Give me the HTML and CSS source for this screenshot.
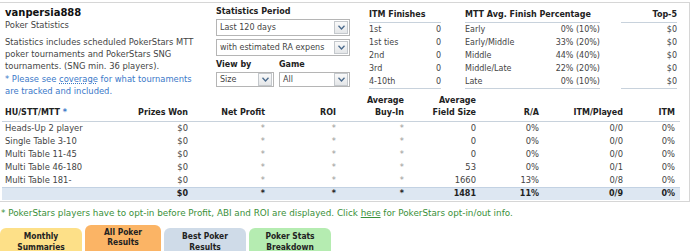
FILE: index.html
```html
<!DOCTYPE html>
<html lang="en">
  <head>
    <meta charset="UTF-8" />
    <title>Poker Statistics</title>
    <link rel="stylesheet" href="styles.css">
  </head>
  <body>
    <div class="panel">
      <div class="top">
        <div class="intro">
          <h1>vanpersia888</h1>
          <div class="subtitle">Poker Statistics</div>
          <p>Statistics includes scheduled PokerStars MTT poker tournaments and PokerStars SNG tournaments. (SNG min. 36 players).</p>
          <p class="note">* Please see <a href="#">coverage</a> for what tournaments are tracked and included.</p>
        </div>

        <div class="filters">
          <div class="label">Statistics Period</div>
          <div class="select">
            <span>Last 120 days</span>
            <span class="arrow"><svg width="7" height="5" viewBox="0 0 7 5"><path d="M0.5 0.8 L3.5 4 L6.5 0.8" fill="none" stroke="#4a6a8c" stroke-width="1.3"/></svg></span>
          </div>
          <div class="select">
            <span>with estimated RA expens</span>
            <span class="arrow"><svg width="7" height="5" viewBox="0 0 7 5"><path d="M0.5 0.8 L3.5 4 L6.5 0.8" fill="none" stroke="#4a6a8c" stroke-width="1.3"/></svg></span>
          </div>
          <div class="filter-row">
            <div class="filter-size">
              <div class="label">View by</div>
              <div class="select">
                <span>Size</span>
                <span class="arrow"><svg width="7" height="5" viewBox="0 0 7 5"><path d="M0.5 0.8 L3.5 4 L6.5 0.8" fill="none" stroke="#4a6a8c" stroke-width="1.3"/></svg></span>
              </div>
            </div>
            <div class="filter-game">
              <div class="label">Game</div>
              <div class="select">
                <span>All</span>
                <span class="arrow"><svg width="7" height="5" viewBox="0 0 7 5"><path d="M0.5 0.8 L3.5 4 L6.5 0.8" fill="none" stroke="#4a6a8c" stroke-width="1.3"/></svg></span>
              </div>
            </div>
          </div>
        </div>

        <table class="mini itm">
          <tr><th colspan="2">ITM Finishes</th></tr>
          <tr><td>1st</td><td class="num">0</td></tr>
          <tr><td>1st ties</td><td class="num">0</td></tr>
          <tr><td>2nd</td><td class="num">0</td></tr>
          <tr><td>3rd</td><td class="num">0</td></tr>
          <tr><td>4-10th</td><td class="num">0</td></tr>
        </table>

        <table class="mini mtt">
          <tr><th colspan="2">MTT Avg. Finish Percentage</th></tr>
          <tr><td>Early</td><td class="num">0% (10%)</td></tr>
          <tr><td>Early/Middle</td><td class="num">33% (20%)</td></tr>
          <tr><td>Middle</td><td class="num">44% (40%)</td></tr>
          <tr><td>Middle/Late</td><td class="num">22% (20%)</td></tr>
          <tr><td>Late</td><td class="num">0% (10%)</td></tr>
        </table>

        <table class="mini top5">
          <tr><th class="num">Top-5</th></tr>
          <tr><td class="num">$0</td></tr>
          <tr><td class="num">$0</td></tr>
          <tr><td class="num">$0</td></tr>
          <tr><td class="num">$0</td></tr>
          <tr><td class="num">$0</td></tr>
        </table>
      </div>

      <table class="results">
        <colgroup>
          <col style="width: 118px" />
          <col style="width: 72px" />
          <col style="width: 77px" />
          <col style="width: 71px" />
          <col style="width: 68px" />
          <col style="width: 72px" />
          <col style="width: 63px" />
          <col style="width: 84px" />
          <col style="width: 53px" />
        </colgroup>
        <thead>
          <tr>
            <th class="first">HU/STT/MTT <span class="star">*</span></th>
            <th>Prizes Won</th>
            <th>Net Profit</th>
            <th>ROI</th>
            <th>Average<br />Buy-In</th>
            <th>Average<br />Field Size</th>
            <th>R/A</th>
            <th>ITM/Played</th>
            <th>ITM</th>
          </tr>
        </thead>
        <tbody>
          <tr>
            <td class="first">Heads-Up 2 player</td>
            <td>$0</td><td class="ast">*</td><td class="ast">*</td><td class="ast">*</td>
            <td>0</td><td>0%</td><td>0/0</td><td>0%</td>
          </tr>
          <tr>
            <td class="first">Single Table 3-10</td>
            <td>$0</td><td class="ast">*</td><td class="ast">*</td><td class="ast">*</td>
            <td>0</td><td>0%</td><td>0/0</td><td>0%</td>
          </tr>
          <tr>
            <td class="first">Multi Table 11-45</td>
            <td>$0</td><td class="ast">*</td><td class="ast">*</td><td class="ast">*</td>
            <td>0</td><td>0%</td><td>0/0</td><td>0%</td>
          </tr>
          <tr>
            <td class="first">Multi Table 46-180</td>
            <td>$0</td><td class="ast">*</td><td class="ast">*</td><td class="ast">*</td>
            <td>53</td><td>0%</td><td>0/1</td><td>0%</td>
          </tr>
          <tr>
            <td class="first">Multi Table 181-</td>
            <td>$0</td><td class="ast">*</td><td class="ast">*</td><td class="ast">*</td>
            <td>1660</td><td>13%</td><td>0/8</td><td>0%</td>
          </tr>
          <tr class="total">
            <td class="first"></td>
            <td>$0</td><td class="ast">*</td><td class="ast">*</td><td class="ast">*</td>
            <td>1481</td><td>11%</td><td>0/9</td><td>0%</td>
          </tr>
        </tbody>
      </table>
    </div>

    <p class="footnote">* PokerStars players have to opt-in before Profit, ABI and ROI are displayed. Click <a href="#">here</a> for PokerStars opt-in/out info.</p>

    <div class="tabs">
      <div class="tab monthly">Monthly<br />Summaries</div>
      <div class="tab all">All Poker<br />Results</div>
      <div class="tab best">Best Poker<br />Results</div>
      <div class="tab stats">Poker Stats<br />Breakdown</div>
    </div>
  </body>
</html>
```

FILE: styles.css
```css
body {
  font-family: "DejaVu Sans", Verdana, sans-serif;
  font-size: 8.4px;
  color: #444;
  background-color: #ffffff;
  margin: 0;
  overflow: hidden;
}
a {
  color: #3a6fb0;
}
.panel {
  width: 689px;
  margin: 2px 0 0 -1px;
  border: 1px solid #d6d6d6;
  background-color: #fff;
  padding-bottom: 1px;
}
.top {
  display: flex;
  align-items: flex-start;
  height: 89px;
  padding: 3px 0 0 5px;
}
.intro {
  width: 202px;
}
h1 {
  margin: 0;
  font-size: 10px;
  line-height: 14px;
  color: #111;
}
.subtitle {
  line-height: 11px;
  margin-bottom: 5px;
}
.intro p {
  margin: 0 0 1px;
  line-height: 12px;
}
.intro .note {
  color: #3a78c8;
}
.intro .note a {
  color: #3a78c8;
  text-decoration: underline dotted;
}
.filters {
  width: 134px;
  margin-left: 9px;
}
.label {
  font-size: 8px;
  font-weight: bold;
  color: #222;
  line-height: 11px;
  margin-bottom: 2px;
}
.select {
  display: flex;
  align-items: center;
  justify-content: space-between;
  height: 15px;
  border: 1px solid #b5b5b5;
  background-color: #fff;
  padding-left: 3px;
  margin-bottom: 3px;
  font-size: 8px;
  overflow: hidden;
  white-space: nowrap;
}
.arrow {
  display: flex;
  align-items: center;
  justify-content: center;
  flex: none;
  width: 12px;
  height: 11px;
  margin-right: 1px;
  border: 1px solid #c4c8cc;
  background: linear-gradient(#fafafa, #e4e6e8);
}
.filter-row {
  display: flex;
  gap: 5px;
}
.filter-size {
  width: 58px;
}
.filter-game {
  flex: 1;
}
.filter-row .select {
  height: 13px;
}
.mini {
  border-collapse: collapse;
  margin-top: 3px;
  font-size: 8px;
}
.mini th {
  text-align: left;
  font-weight: bold;
  color: #222;
  line-height: 11px;
  padding: 0 0 2px;
  border-bottom: 1px solid #c8d2dc;
}
.mini td {
  line-height: 13px;
  padding: 0;
  white-space: nowrap;
}
.mini tr:last-child td {
  border-bottom: 1px solid #c8d2dc;
}
.mini .num {
  text-align: right;
}
.itm {
  width: 72px;
  margin-left: 19px;
}
.mtt {
  width: 135px;
  margin-left: 24px;
}
.top5 {
  width: 56px;
  margin-left: 21px;
}
.results {
  table-layout: fixed;
  border-collapse: collapse;
  width: 678px;
  margin-left: 2px;
}
.results th {
  font-size: 8px;
  font-weight: bold;
  color: #222;
  text-align: right;
  vertical-align: bottom;
  line-height: 12px;
  padding: 0 4px 2px;
  border-bottom: 1px solid #c8d2dc;
}
.results td {
  text-align: right;
  line-height: 13px;
  padding: 0 4px;
  white-space: nowrap;
}
.results th:last-child,
.results td:last-child {
  padding-right: 5px;
}
.results .first {
  text-align: left;
  padding-left: 3px;
}
.results .star {
  color: #3a78c8;
}
.results .ast {
  color: #999;
}
.results .total td {
  background-color: #dde7f2;
  border-top: 1px solid #c3d2e3;
  font-size: 8px;
  font-weight: bold;
  color: #222;
  line-height: 12px;
}
.footnote {
  margin: 5px 0 0 1px;
  font-size: 8.8px;
  color: #3a903a;
  line-height: 12px;
}
.footnote a {
  color: #3a903a;
}
.tabs {
  display: flex;
  align-items: flex-end;
  gap: 3px;
  margin-top: 7px;
  height: 28px;
}
.tab {
  width: 82px;
  height: 23px;
  padding-top: 3px;
  font-family: "DejaVu Sans Condensed", "DejaVu Sans", sans-serif;
  font-weight: bold;
  font-size: 8.4px;
  line-height: 11px;
  text-align: center;
  color: #222;
  border-radius: 6px 6px 0 0;
  overflow: hidden;
}
.monthly {
  background-color: #fde088;
}
.all {
  height: 27px;
  width: 76px;
  padding-top: 2px;
  line-height: 10px;
  background-color: #fbb465;
}
.best {
  background-color: #cfdbe8;
}
.stats {
  background-color: #b5ecb1;
}
```
